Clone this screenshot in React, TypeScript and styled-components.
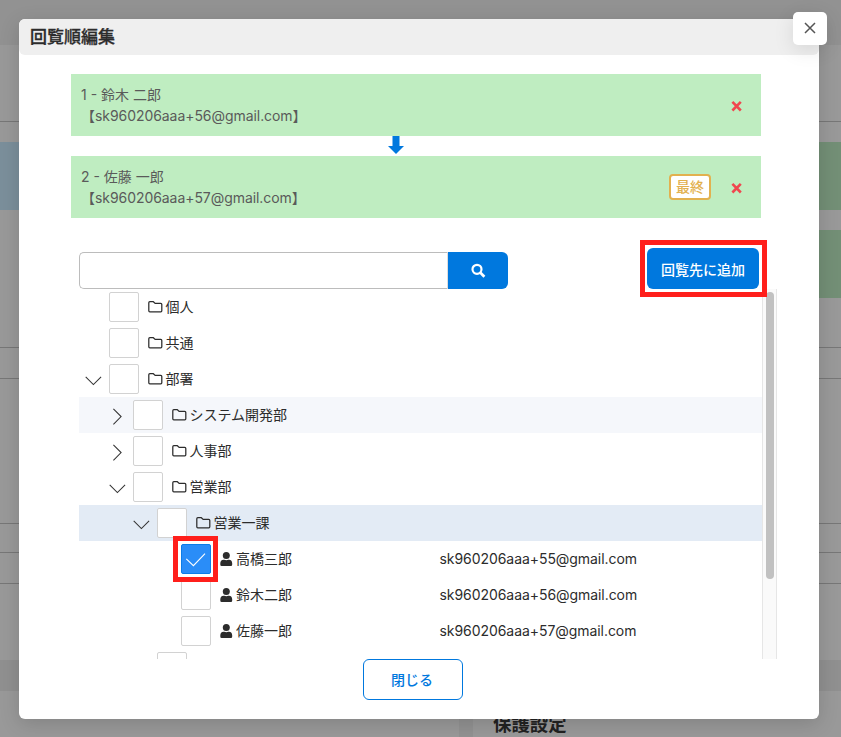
import React from "react";
import styled, { createGlobalStyle } from "styled-components";

const GlobalStyle = createGlobalStyle`
  * { box-sizing: border-box; }
  body {
    margin: 0;
    overflow: hidden;
    font-family: Inter, "Noto Sans CJK JP", sans-serif;
    font-size: 14px;
    color: #2c2c2c;
  }
  button, input { font: inherit; margin: 0; }
  svg { display: block; }
`;

const Page = styled.div`
  position: relative;
  width: 841px;
  height: 737px;
  overflow: hidden;
  background: #929292;
`;

const Backdrop = styled.div`
  display: flex;
  flex-direction: column;
  height: 737px;
  padding-top: 45px;
`;

const Band = styled.div<{ $h: number; $line?: boolean; $bg?: string }>`
  display: flex;
  justify-content: space-between;
  flex: none;
  height: ${(p) => p.$h}px;
  background: ${(p) => p.$bg ?? "#999"};
  border-bottom: ${(p) => (p.$line ? "1px solid #777" : "none")};
`;

const Swatch = styled.div<{ $color: string }>`
  width: 50px;
  background: ${(p) => p.$color};
`;

const BackPanels = styled.div`
  display: grid;
  grid-template-columns: 459px 1fr;
  gap: 14px;
  flex: 1;
  min-height: 0;
`;

const BackPanel = styled.div`
  background: #999;
  padding: 20px 20px 0;
`;

const BackHeading = styled.div`
  font-size: 18.4px;
  font-weight: 700;
  line-height: 26px;
  color: #222;
`;

const Modal = styled.section`
  position: absolute;
  left: 19px;
  top: 19px;
  width: 800px;
  height: 700px;
  border-radius: 6px;
  background: #fff;
  box-shadow: 0 5px 20px rgba(0, 0, 0, 0.15);
`;

const ModalHeader = styled.header`
  height: 36px;
  padding: 0 11px;
  border-radius: 6px;
  background: #efefef;
  font-size: 17px;
  font-weight: 500;
  line-height: 37px;
  -webkit-text-stroke: 0.3px #2c2c2c;
`;

const CloseCorner = styled.button`
  position: absolute;
  top: -7px;
  right: -8px;
  display: grid;
  place-items: center;
  width: 34px;
  height: 33px;
  padding: 0 1px 1px 0;
  border: 0;
  border-radius: 5px;
  background: #fff;
  box-shadow: 0 5px 20px rgba(0, 0, 0, 0.1);
`;

const ModalBody = styled.div`
  display: flex;
  flex-direction: column;
  padding: 19px 42px 0 52px;
`;

const Step = styled.div`
  display: flex;
  align-items: center;
  width: 690px;
  height: 62px;
  padding: 0 18px 0 10px;
  background: #bfedc1;
  color: #5a5a5a;
`;

const StepText = styled.div`
  flex: 1;
  line-height: 21px;
  white-space: nowrap;
`;

const Address = styled.div`
  letter-spacing: -0.06px;
`;

const RowAddress = styled(Address)`
  padding-bottom: 2px;
`;

const FinalTag = styled.span`
  width: 42px;
  height: 26px;
  margin-right: 18px;
  border: 2px solid #e2b14f;
  border-radius: 4px;
  background: #fff;
  color: #e2b14f;
  font-weight: 500;
  line-height: 21px;
  text-align: center;
`;

const RemoveIcon = styled.span`
  display: grid;
  place-items: center;
  width: 14px;
  height: 14px;
  margin-top: 2px;
`;

const Connector = styled.div`
  width: 650px;
  height: 20px;
  display: flex;
  justify-content: center;
`;

const Toolbar = styled.div`
  display: flex;
  align-items: flex-end;
  justify-content: space-between;
  height: 41px;
  margin: 30px 2px 0 8px;
  width: 680px;
`;

const SearchGroup = styled.div`
  display: flex;
  width: 429px;
  height: 37px;
`;

const SearchInput = styled.input`
  width: 369px;
  padding: 0 10px;
  border: 1px solid #bcbcbc;
  border-right-color: #ddd;
  border-radius: 5px 0 0 5px;
  background: #fff;
`;

const SearchButton = styled.button`
  display: grid;
  place-items: center;
  width: 60px;
  padding: 0;
  border: 0;
  border-radius: 0 6px 6px 0;
  background: #0078de;
`;

const Highlight = styled.span<{ $outset: string }>`
  position: absolute;
  inset: ${(p) => p.$outset};
  z-index: 2;
  border: 5px solid #ff1f1b;
  pointer-events: none;
`;

const AddButton = styled.button`
  position: relative;
  width: 112px;
  height: 41px;
  padding: 1px 0 0;
  border: 0;
  border-radius: 6px;
  background: #0078de;
  color: #fff;
  font-weight: 500;
  white-space: nowrap;
  line-height: 42px;
`;

const ListArea = styled.div`
  display: flex;
  width: 698px;
  height: 370px;
  margin-left: 8px;
  overflow: hidden;
`;

const Rows = styled.div`
  width: 683px;
`;

const Row = styled.div<{ $level: number; $bg?: string }>`
  display: flex;
  align-items: center;
  height: 36px;
  padding-left: ${(p) => p.$level * 24}px;
  background: ${(p) => p.$bg ?? "transparent"};
  white-space: nowrap;
`;

const Toggle = styled.span`
  display: grid;
  place-items: center;
  width: 30px;
  height: 30px;
  padding: 3px 2px 0 0;
`;

const Check = styled.span<{ $on?: boolean }>`
  position: relative;
  display: grid;
  place-items: center;
  width: 30px;
  height: 30px;
  border: 1px solid ${(p) => (p.$on ? "#0c7de8" : "#d2d2d2")};
  border-radius: 2px;
  background: ${(p) => (p.$on ? "#2a8df8" : "#fff")};
`;

const Kind = styled.span<{ $person?: boolean }>`
  width: ${(p) => (p.$person ? 13 : 15)}px;
  margin: 0 ${(p) => (p.$person ? 3 : 2.5)}px 0 9px;
`;

const Name = styled.span<{ $person?: boolean }>`
  width: ${(p) => (p.$person ? "203.5px" : "auto")};
  line-height: 36px;
`;

const Track = styled.div`
  width: 15px;
  padding: 3px 3px 0;
  border-left: 1px solid #e6e6e6;
  border-right: 1px solid #e6e6e6;
  background: #fafafa;
`;

const Thumb = styled.div`
  width: 8px;
  height: 287px;
  border-radius: 4px;
  background: #c1c1c1;
`;

const CloseButton = styled.button`
  width: 100px;
  height: 41px;
  margin-left: 292px;
  padding: 0 2px 1px 0;
  border: 1px solid #0078de;
  border-radius: 6px;
  background: #fff;
  color: #0078de;
  font-weight: 500;
`;

const FolderIcon = () => (
  <svg width="15" height="14" viewBox="0 0 15 14" fill="none" stroke="#2c2c2c" strokeWidth="1.25" strokeLinejoin="round">
    <path d="M.8 2.7q0-1 1-1H5.4L7.1 3.4h5.7q1 0 1 1v6.4q0 1-1 1h-11q-1 0-1-1z" />
  </svg>
);

const PersonIcon = () => (
  <svg width="13" height="14" viewBox="0 0 13 14" fill="#2c2c2c">
    <circle cx="6.3" cy="3.6" r="3.5" />
    <path d="M3.6 7.7h.6q2.1.9 4.2 0H9q3.2.3 3.2 3.7v1q0 1.5-1.3 1.5H1.6Q.3 13.900.3 12.400v-1q0-3.400 3.300-3.700z" />
  </svg>
);

const ChevronDown = () => (
  <svg width="18" height="18" viewBox="0 0 18 18" fill="none" stroke="#333" strokeWidth="1.05">
    <path d="M1.7 4.9 9.4 12.6 17.1 4.9" />
  </svg>
);

const ChevronRight = () => (
  <svg width="18" height="18" viewBox="0 0 18 18" fill="none" stroke="#333" strokeWidth="1.05">
    <path d="M5.4 .9 13.100 8.600 5.400 16.300" />
  </svg>
);

const CheckMark = () => (
  <svg width="28" height="28" viewBox="0 0 28 28" fill="none" stroke="#fff" strokeWidth="1.1">
    <path d="M4.300 13.800 11.400 20.700 23 8.700" />
  </svg>
);

const RemoveCross = () => (
  <svg width="11" height="11" viewBox="0 0 11 11" stroke="#f0474f" strokeWidth="2.600">
    <path d="M1.400 .9 9.800 9.500M9.800 .9 1.400 9.500" />
  </svg>
);

const DownArrow = () => (
  <svg width="16" height="18" viewBox="0 0 16 18" fill="#0078de">
    <path d="M4.500 0h7v10H16L8 18 0 10h4.500z" />
  </svg>
);

const SearchIcon = () => (
  <svg width="15" height="15" viewBox="0 0 15 15" fill="none" stroke="#fff" strokeWidth="2.200">
    <circle cx="6" cy="6.300" r="4.500" />
    <path d="M9.200 9.500 13.400 13.700" strokeWidth="2.700" />
  </svg>
);

type Item = {
  name: string;
  level: number;
  open?: boolean;
  mail?: string;
  bg?: string;
  checked?: boolean;
};

const items: Item[] = [
  { name: "個人", level: 0 },
  { name: "共通", level: 0 },
  { name: "部署", level: 0, open: true },
  { name: "システム開発部", level: 1, open: false, bg: "#f5f7fb" },
  { name: "人事部", level: 1, open: false },
  { name: "営業部", level: 1, open: true },
  { name: "営業一課", level: 2, open: true, bg: "#e3ebf5" },
  { name: "高橋三郎", level: 3, mail: "sk960206aaa+55@gmail.com", checked: true },
  { name: "鈴木二郎", level: 3, mail: "sk960206aaa+56@gmail.com" },
  { name: "佐藤一郎", level: 3, mail: "sk960206aaa+57@gmail.com" },
  { name: "", level: 2 },
];

const TreeRow = ({ item }: { item: Item }) => (
  <Row $level={item.level} $bg={item.bg}>
    <Toggle>
      {item.open === true && <ChevronDown />}
      {item.open === false && <ChevronRight />}
    </Toggle>
    <Check $on={item.checked}>
      {item.checked && (
        <>
          <CheckMark />
          <Highlight $outset="-9px -8px -9px -9px" />
        </>
      )}
    </Check>
    {item.name && (
      <>
        <Kind $person={!!item.mail}>{item.mail ? <PersonIcon /> : <FolderIcon />}</Kind>
        <Name $person={!!item.mail}>{item.name}</Name>
        {item.mail && <RowAddress>{item.mail}</RowAddress>}
      </>
    )}
  </Row>
);

const StepCard = ({ title, mail, last }: { title: string; mail: string; last?: boolean }) => (
  <Step>
    <StepText>
      <div>{title}</div>
      <Address>【{mail}】</Address>
    </StepText>
    {last && <FinalTag>最終</FinalTag>}
    <RemoveIcon>
      <RemoveCross />
    </RemoveIcon>
  </Step>
);

export default function App() {
  return (
    <>
      <GlobalStyle />
      <Page>
        <Backdrop>
          <Band $h={77} $line />
          <Band $h={20} />
          <Band $h={68}>
            <Swatch $color="#7b8f9b" />
            <Swatch $color="#738f76" />
          </Band>
          <Band $h={20} />
          <Band $h={68}>
            <span />
            <Swatch $color="#738f76" />
          </Band>
          <Band $h={50} $line />
          <Band $h={31} $line />
          <Band $h={145} $line />
          <Band $h={29} $line />
          <Band $h={31} $line />
          <Band $h={76} />
          <Band $h={31} $bg="#909090" />
          <BackPanels>
            <BackPanel />
            <BackPanel>
              <BackHeading>保護設定</BackHeading>
            </BackPanel>
          </BackPanels>
        </Backdrop>
        <Modal>
          <ModalHeader>回覧順編集</ModalHeader>
          <CloseCorner aria-label="close">
            <svg width="12" height="12" viewBox="0 0 12 12" stroke="#555" strokeWidth="1.500">
              <path d="M1 1 11 11M11 1 1 11" />
            </svg>
          </CloseCorner>
          <ModalBody>
            <StepCard title="1 - 鈴木 二郎" mail="sk960206aaa+56@gmail.com" />
            <Connector>
              <DownArrow />
            </Connector>
            <StepCard title="2 - 佐藤 一郎" mail="sk960206aaa+57@gmail.com" last />
            <Toolbar>
              <SearchGroup>
                <SearchInput />
                <SearchButton aria-label="search">
                  <SearchIcon />
                </SearchButton>
              </SearchGroup>
              <AddButton>
                回覧先に追加
                <Highlight $outset="-8px -8px -8px -7px" />
              </AddButton>
            </Toolbar>
            <ListArea>
              <Rows>
                {items.map((item, i) => (
                  <TreeRow key={i} item={item} />
                ))}
              </Rows>
              <Track>
                <Thumb />
              </Track>
            </ListArea>
            <CloseButton>閉じる</CloseButton>
          </ModalBody>
        </Modal>
      </Page>
    </>
  );
}
